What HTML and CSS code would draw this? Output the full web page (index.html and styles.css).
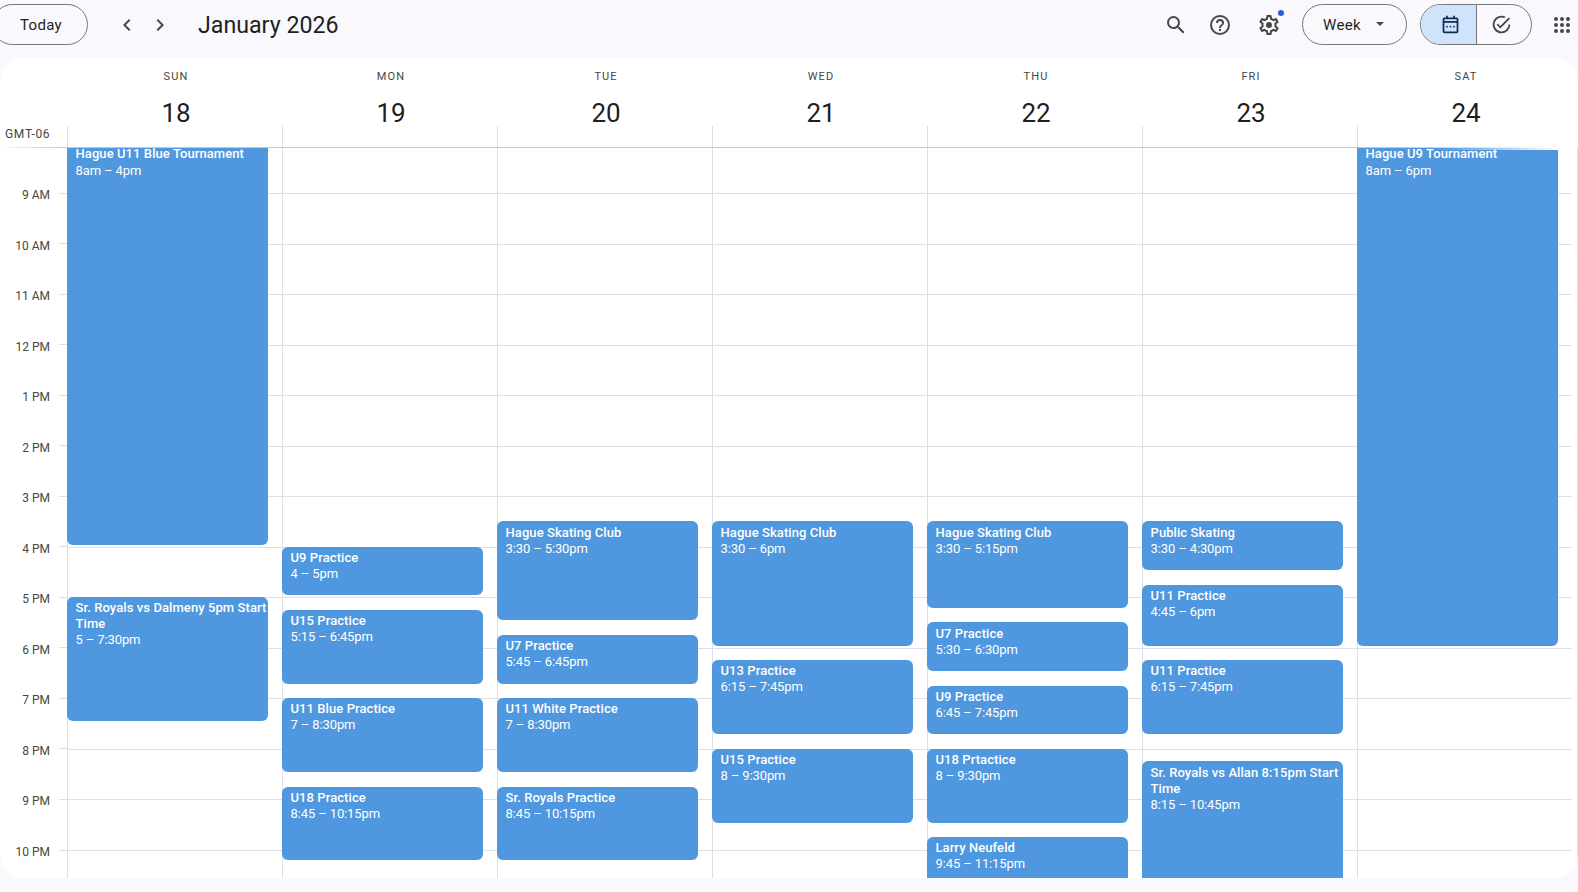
FILE: index.html
```html
<!DOCTYPE html>
<html lang="en">
<head>
    <meta charset="UTF-8">
    <title>Calendar - Week of January 18, 2026</title>
    <link rel="stylesheet" href="styles.css">
</head>
<body>
    <header class="toolbar">
        <button class="pill today">Today</button>
        <div class="nav-arrows">
            <svg class="icon" viewBox="0 0 24 24"><path d="M15.4 7.4 14 6l-6 6 6 6 1.4-1.4-4.6-4.6z"/></svg>
            <svg class="icon" viewBox="0 0 24 24"><path d="M8.6 16.6 10 18l6-6-6-6-1.4 1.4 4.6 4.6z"/></svg>
        </div>
        <h1 class="month">January 2026</h1>
        <div class="tools">
            <svg class="icon" viewBox="0 0 24 24"><path d="M15.5 14h-.79l-.28-.27A6.47 6.47 0 0 0 16 9.5 6.5 6.5 0 1 0 9.5 16c1.61 0 3.09-.59 4.23-1.57l.27.28v.79l5 4.99L20.49 19l-4.99-5zm-6 0C7.01 14 5 11.99 5 9.5S7.01 5 9.5 5 14 7.01 14 9.5 11.99 14 9.5 14z"/></svg>
            <svg class="icon" viewBox="0 0 24 24"><path d="M11 18h2v-2h-2v2zm1-16a10 10 0 1 0 0 20 10 10 0 0 0 0-20zm0 18a8 8 0 1 1 0-16 8 8 0 0 1 0 16zm0-14a4 4 0 0 0-4 4h2a2 2 0 1 1 4 0c0 2-3 1.75-3 5h2c0-2.25 3-2.5 3-5a4 4 0 0 0-4-4z"/></svg>
            <span class="gear">
                <svg class="icon" viewBox="0 0 24 24"><path d="M19.43 12.98c.04-.32.07-.64.07-.98 0-.34-.03-.66-.07-.98l2.11-1.65c.19-.15.24-.42.12-.64l-2-3.46a.5.5 0 0 0-.61-.22l-2.49 1c-.52-.4-1.08-.73-1.69-.98l-.38-2.65A.488.488 0 0 0 14 2h-4c-.25 0-.46.18-.49.42l-.38 2.65c-.61.25-1.17.59-1.69.98l-2.49-1a.566.566 0 0 0-.18-.03c-.17 0-.34.09-.43.25l-2 3.46c-.13.22-.07.49.12.64l2.11 1.65c-.04.32-.07.65-.07.98 0 .33.03.66.07.98l-2.11 1.65c-.19.15-.24.42-.12.64l2 3.46a.5.5 0 0 0 .61.22l2.49-1c.52.4 1.08.73 1.69.98l.38 2.65c.03.24.24.42.49.42h4c.25 0 .46-.18.49-.42l.38-2.65c.61-.25 1.17-.59 1.69-.98l2.49 1c.06.02.12.03.18.03.17 0 .34-.09.43-.25l2-3.46c.12-.22.07-.49-.12-.64l-2.11-1.65zm-1.98-1.71c.04.31.05.52.05.73 0 .21-.02.43-.05.73l-.14 1.13.89.7 1.08.84-.7 1.21-1.27-.51-1.04-.42-.9.68c-.43.32-.84.56-1.25.73l-1.06.43-.16 1.13-.2 1.35h-1.4l-.19-1.35-.16-1.13-1.06-.43c-.43-.18-.83-.41-1.23-.71l-.91-.7-1.06.43-1.27.51-.7-1.21 1.08-.84.89-.7-.14-1.13c-.03-.31-.05-.54-.05-.74s.02-.43.05-.73l.14-1.13-.89-.7-1.08-.84.7-1.21 1.27.51 1.04.42.9-.68c.43-.32.84-.56 1.25-.73l1.06-.43.16-1.13.2-1.35h1.39l.19 1.35.16 1.13 1.06.43c.43.18.83.41 1.23.71l.91.7 1.06-.43 1.27-.51.7 1.21-1.07.85-.89.7.14 1.13zM12 9a3 3 0 1 0 0 6 3 3 0 0 0 0-6z"/></svg>
                <span class="gear-dot"></span>
            </span>
        </div>
        <button class="pill week">Week <span class="caret"></span></button>
        <div class="switch">
            <span class="switch-item active">
                <svg class="icon" viewBox="0 0 24 24"><path d="M5 22a2 2 0 0 1-2-2V6a2 2 0 0 1 2-2h2V2h2v2h6V2h2v2h2a2 2 0 0 1 2 2v14a2 2 0 0 1-2 2H5zm0-2h14V10H5v10zM5 8h14V6H5v2zm3 7.500a1 1 0 1 1 0-2 1 1 0 0 1 0 2zm4 0a1 1 0 1 1 0-2 1 1 0 0 1 0 2zm4 0a1 1 0 1 1 0-2 1 1 0 0 1 0 2z"/></svg>
            </span>
            <span class="switch-item">
                <svg class="icon" viewBox="0 0 24 24"><path d="M12 22a10 10 0 1 1 4.700-18.800l-1.500 1.500A8 8 0 1 0 20 12h2a10 10 0 0 1-10 10zm-1.400-5.400-4.200-4.200 1.400-1.400 2.800 2.800 9.700-9.700 1.400 1.400z"/></svg>
            </span>
        </div>
        <svg class="icon apps" viewBox="0 0 24 24"><path d="M6 8a2 2 0 1 0 0-4 2 2 0 0 0 0 4zm6 0a2 2 0 1 0 0-4 2 2 0 0 0 0 4zm6 0a2 2 0 1 0 0-4 2 2 0 0 0 0 4zM6 14a2 2 0 1 0 0-4 2 2 0 0 0 0 4zm6 0a2 2 0 1 0 0-4 2 2 0 0 0 0 4zm6 0a2 2 0 1 0 0-4 2 2 0 0 0 0 4zM6 20a2 2 0 1 0 0-4 2 2 0 0 0 0 4zm6 0a2 2 0 1 0 0-4 2 2 0 0 0 0 4zm6 0a2 2 0 1 0 0-4 2 2 0 0 0 0 4z"/></svg>
    </header>

    <main class="panel">
        <div class="day-heads">
            <div class="gmt">GMT-06</div>
            <div class="day-head"><span class="dow">SUN</span><span class="date">18</span></div>
            <div class="day-head"><span class="dow">MON</span><span class="date">19</span></div>
            <div class="day-head"><span class="dow">TUE</span><span class="date">20</span></div>
            <div class="day-head"><span class="dow">WED</span><span class="date">21</span></div>
            <div class="day-head"><span class="dow">THU</span><span class="date">22</span></div>
            <div class="day-head"><span class="dow">FRI</span><span class="date">23</span></div>
            <div class="day-head"><span class="dow">SAT</span><span class="date">24</span></div>
        </div>
        <div class="week-grid">
            <div class="hours">
                <div class="hour">8 AM</div>
                <div class="hour">9 AM</div>
                <div class="hour">10 AM</div>
                <div class="hour">11 AM</div>
                <div class="hour">12 PM</div>
                <div class="hour">1 PM</div>
                <div class="hour">2 PM</div>
                <div class="hour">3 PM</div>
                <div class="hour">4 PM</div>
                <div class="hour">5 PM</div>
                <div class="hour">6 PM</div>
                <div class="hour">7 PM</div>
                <div class="hour">8 PM</div>
                <div class="hour">9 PM</div>
                <div class="hour">10 PM</div>
            </div>
            <div class="day">
                <div class="event scrolled" style="--start:8;--len:8"><b>Hague U11 Blue Tournament</b>8am – 4pm</div>
                <div class="event" style="--start:17;--len:2.5"><b>Sr. Royals vs Dalmeny 5pm Start Time</b>5 – 7:30pm</div>
            </div>
            <div class="day">
                <div class="event" style="--start:16;--len:1"><b>U9 Practice</b>4 – 5pm</div>
                <div class="event" style="--start:17.25;--len:1.5"><b>U15 Practice</b>5:15 – 6:45pm</div>
                <div class="event" style="--start:19;--len:1.5"><b>U11 Blue Practice</b>7 – 8:30pm</div>
                <div class="event" style="--start:20.75;--len:1.5"><b>U18 Practice</b>8:45 – 10:15pm</div>
            </div>
            <div class="day">
                <div class="event" style="--start:15.5;--len:2"><b>Hague Skating Club</b>3:30 – 5:30pm</div>
                <div class="event" style="--start:17.75;--len:1"><b>U7 Practice</b>5:45 – 6:45pm</div>
                <div class="event" style="--start:19;--len:1.5"><b>U11 White Practice</b>7 – 8:30pm</div>
                <div class="event" style="--start:20.75;--len:1.5"><b>Sr. Royals Practice</b>8:45 – 10:15pm</div>
            </div>
            <div class="day">
                <div class="event" style="--start:15.5;--len:2.5"><b>Hague Skating Club</b>3:30 – 6pm</div>
                <div class="event" style="--start:18.25;--len:1.5"><b>U13 Practice</b>6:15 – 7:45pm</div>
                <div class="event" style="--start:20;--len:1.5"><b>U15 Practice</b>8 – 9:30pm</div>
            </div>
            <div class="day">
                <div class="event" style="--start:15.5;--len:1.75"><b>Hague Skating Club</b>3:30 – 5:15pm</div>
                <div class="event" style="--start:17.5;--len:1"><b>U7 Practice</b>5:30 – 6:30pm</div>
                <div class="event" style="--start:18.75;--len:1"><b>U9 Practice</b>6:45 – 7:45pm</div>
                <div class="event" style="--start:20;--len:1.5"><b>U18 Prtactice</b>8 – 9:30pm</div>
                <div class="event" style="--start:21.75;--len:1.5"><b>Larry Neufeld</b>9:45 – 11:15pm</div>
            </div>
            <div class="day">
                <div class="event" style="--start:15.5;--len:1"><b>Public Skating</b>3:30 – 4:30pm</div>
                <div class="event" style="--start:16.75;--len:1.25"><b>U11 Practice</b>4:45 – 6pm</div>
                <div class="event" style="--start:18.25;--len:1.5"><b>U11 Practice</b>6:15 – 7:45pm</div>
                <div class="event" style="--start:20.25;--len:2.5"><b>Sr. Royals vs Allan 8:15pm Start Time</b>8:15 – 10:45pm</div>
            </div>
            <div class="day">
                <div class="event scrolled faded" style="--start:8;--len:10"><b>Hague U9 Tournament</b>8am – 6pm</div>
            </div>
        </div>
    </main>
</body>
</html>
```

FILE: styles.css
```css
:root {
    --page-bg: #f9f8fc;
    --line: #dedee6;
    --text: #1f1f1f;
    --muted: #444746;
    --event: #4f97de;
    --hour: 50.54px;
}
* {
    margin: 0;
    padding: 0;
    box-sizing: border-box;
}
body {
    width: 1578px;
    height: 892px;
    overflow: hidden;
    background-color: var(--page-bg);
    color: var(--text);
    font-family: 'Roboto', sans-serif;
}
.icon {
    width: 24px;
    height: 24px;
    fill: var(--muted);
    display: block;
}

/* top bar */
.toolbar {
    height: 58px;
    padding-bottom: 9px;
    padding-right: 4.5px;
    display: flex;
    align-items: center;
}
.pill {
    height: 41px;
    border: 1px solid #747775;
    border-radius: 21px;
    background: transparent;
    color: var(--text);
    font-family: 'Roboto', sans-serif;
    font-size: 15px;
    font-weight: 400;
    letter-spacing: 0.3px;
}
.today {
    width: 96px;
    margin-left: -8px;
    padding-left: 2px;
}
.nav-arrows {
    margin-left: 27px;
    display: flex;
    gap: 9px;
}
.month {
    margin-left: 26px;
    font-size: 23.2px;
    font-weight: 400;
}
.tools {
    margin-left: auto;
    display: flex;
    gap: 20px;
}
.gear {
    position: relative;
    margin-left: 5px;
}
.gear-dot {
    position: absolute;
    top: -3px;
    right: -3px;
    width: 6px;
    height: 6px;
    border-radius: 50%;
    background-color: #2b5bd7;
}
.week {
    width: 105px;
    margin-left: 21px;
    padding-right: 1px;
    display: flex;
    align-items: center;
    justify-content: center;
    gap: 15px;
}
.caret {
    border-left: 4px solid transparent;
    border-right: 4px solid transparent;
    border-top: 4px solid var(--muted);
    margin-top: -2px;
}
.switch {
    width: 112px;
    height: 41px;
    margin-left: 13px;
    border: 1px solid #747775;
    border-radius: 21px;
    overflow: hidden;
    display: flex;
}
.switch-item {
    flex: 1;
    padding-right: 5px;
    display: flex;
    align-items: center;
    justify-content: center;
}
.switch-item .icon {
    width: 21px;
    height: 21px;
}
.switch-item.active {
    flex: 0 0 56px;
    padding: 0 0 0 4px;
    background-color: #cfe4fb;
    border-right: 1px solid #747775;
}
.switch-item.active .icon {
    fill: #0b2f55;
}
.apps {
    margin-left: 18px;
}

/* calendar panel */
.panel {
    height: 820px;
    background-color: white;
    border-radius: 24px;
    overflow: hidden;
    display: flex;
    flex-direction: column;
}
.day-heads {
    height: 90px;
    padding-left: 67px;
    padding-right: 6px;
    border-bottom: 1px solid #c7c7cc;
    border-image: linear-gradient(to right, transparent, #c7c7cc 60px, #c7c7cc 1400px, transparent 1560px) 1;
    display: flex;
    position: relative;
}
.gmt {
    position: absolute;
    left: 5px;
    top: 69px;
    font-size: 12px;
    letter-spacing: 0.7px;
    color: var(--muted);
}
.day-head {
    width: 215px;
    padding-left: 3px;
    display: flex;
    flex-direction: column;
    align-items: center;
    position: relative;
}
.day-head::after {
    content: "";
    position: absolute;
    left: 0;
    bottom: 0;
    height: 21px;
    border-left: 1px solid var(--line);
}
.dow {
    margin-top: 12px;
    font-size: 11px;
    letter-spacing: 1.1px;
    color: var(--muted);
}
.date {
    margin-top: 15px;
    font-size: 26px;
}
.week-grid {
    flex: 1;
    display: flex;
    padding-right: 5px;
    border-right: 1px solid var(--line);
    overflow: hidden;
}
.hours {
    width: 67px;
    margin-top: -5.54px;
    flex-shrink: 0;
    background-image: repeating-linear-gradient(to bottom, var(--line) 0, var(--line) 1px, transparent 1px, transparent var(--hour));
    background-size: 8px 100%;
    background-position: right top;
    background-repeat: no-repeat;
}
.hour {
    height: var(--hour);
    padding-right: 17px;
    text-align: right;
    font-size: 12px;
    line-height: 14px;
    color: var(--muted);
    transform: translateY(-5.5px);
}
.day {
    width: 215px;
    position: relative;
    border-left: 1px solid var(--line);
    background-image: repeating-linear-gradient(to bottom, var(--line) 0, var(--line) 1px, transparent 1px, transparent var(--hour));
    background-position: 0 -5.54px;
    background-size: 100% calc(var(--hour) * 15);
}
.event {
    position: absolute;
    left: -1px;
    width: 201px;
    top: calc(44.9px + (var(--start) - 9) * var(--hour));
    height: calc(var(--len) * var(--hour) - 2.1px);
    padding: 3.1px 0 0 8.5px;
    background-color: var(--event);
    border-radius: 6px;
    color: white;
    font-size: 13px;
    line-height: 16px;
    letter-spacing: -0.12px;
    overflow: hidden;
}
.event b {
    display: block;
    width: 200px;
    font-weight: 500;
    letter-spacing: 0.08px;
}
.event.scrolled {
    padding-top: 5.7px;
}
.event.scrolled b {
    line-height: 12px;
    margin-bottom: 2.5px;
}
.event.faded::before {
    content: "";
    position: absolute;
    top: 5.5px;
    left: 0;
    right: 0;
    height: 2px;
    background: linear-gradient(to right, transparent 40%, white);
}
```
